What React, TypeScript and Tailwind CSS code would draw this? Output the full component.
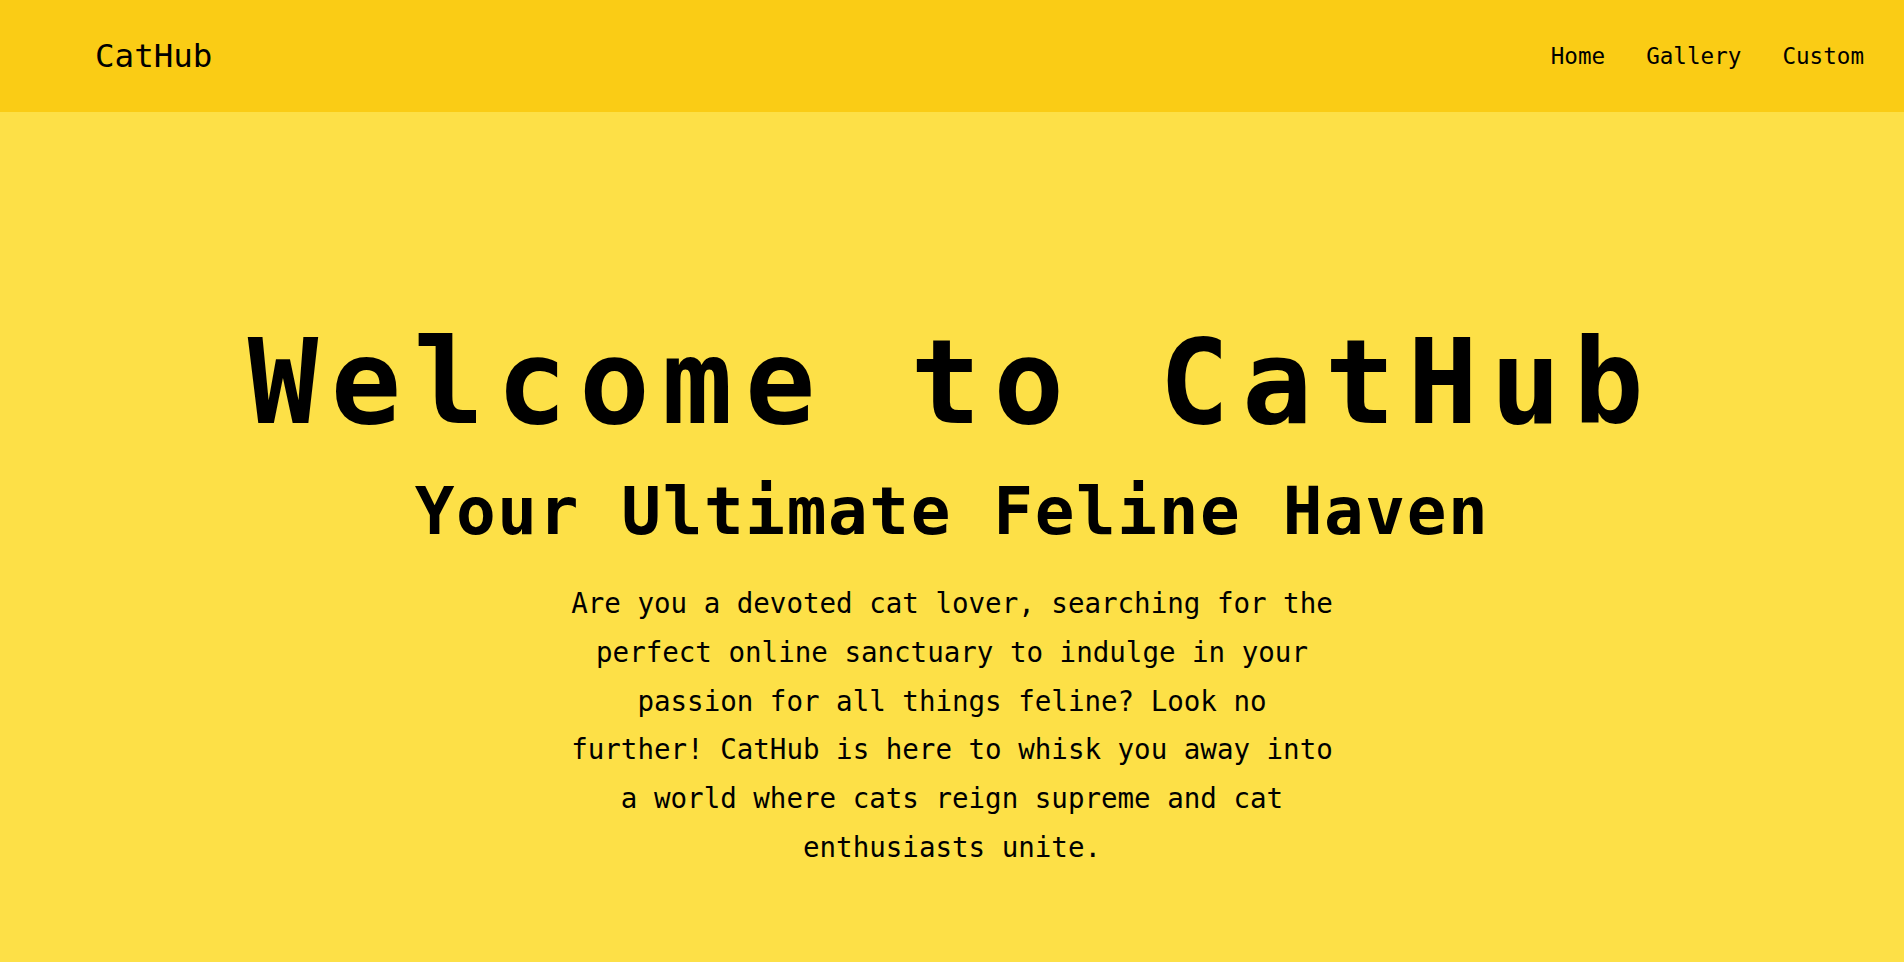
const links = ["Home", "Gallery", "Custom"];

function Header() {
  return (
    <header className="flex h-[112px] items-center justify-between bg-[#facc15] pl-[95px] pr-[40px]">
      <a href="#" className="text-[32.5px] leading-none text-black">
        CatHub
      </a>
      <nav className="flex items-center gap-[41px]">
        {links.map((link) => (
          <a key={link} href="#" className="text-[22.6px] leading-none text-black">
            {link}
          </a>
        ))}
      </nav>
    </header>
  );
}

function Hero() {
  return (
    <section className="flex flex-col items-center pt-[212px] text-center text-black">
      <h1 className="text-[117px] font-bold leading-none tracking-[12.4px]">
        Welcome to CatHub
      </h1>
      <h2 className="mt-[38px] text-[66px] font-bold leading-none tracking-[1.6px]">
        Your Ultimate Feline Haven
      </h2>
      <p className="mt-[34px] max-w-3xl text-[27.5px] leading-[48.75px]">
        Are you a devoted cat lover, searching for the perfect online sanctuary
        to indulge in your passion for all things feline? Look no further!
        CatHub is here to whisk you away into a world where cats reign supreme
        and cat enthusiasts unite.
      </p>
    </section>
  );
}

export default function App() {
  return (
    <div className="min-h-screen bg-[#fde047] font-['DejaVu_Sans_Mono',monospace]">
      <Header />
      <Hero />
    </div>
  );
}
